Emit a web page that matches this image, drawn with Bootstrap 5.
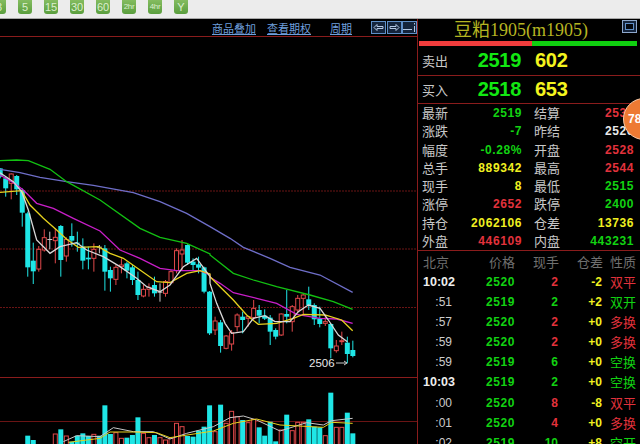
<!DOCTYPE html>
<html lang="zh">
<head>
  <meta charset="UTF-8">
  <title>豆粕1905</title>
  <link href="https://cdn.jsdelivr.net/npm/bootstrap@5.3.0/dist/css/bootstrap.min.css" rel="stylesheet">
  <style>
    html, body { height: 444px; overflow: hidden; background: #000; }
    body { font-family: "Liberation Sans", "Noto Sans CJK SC", sans-serif; }
    .period-bar { height: 19px; background: #ececec; border-bottom: 1px solid #a8a8a8; gap: 12px; overflow: hidden; }
    .period-btn { width: 14px; height: 14px; flex: none; background: linear-gradient(#84bc60, #5a9e3e); border-radius: 0 0 3px 3px; color: #dcefce; font-size: 11px; line-height: 14px; text-align: center; }
    .period-btn.first { margin-left: -8px; }
    .period-btn.tiny { font-size: 8px; letter-spacing: -.3px; }
    .chart-side { width: 417px; flex: none; }
    .chart-head { height: 18px; border-bottom: 1px solid #8a1c1c; }
    .chart-link { color: #6f9fdc; font-size: 11px; line-height: 15px; margin-top: 2px; text-decoration: underline; font-family: "Noto Sans CJK SC", sans-serif; }
    .icon-box { width: 15px; height: 13px; flex: none; display: block; margin-top: 2px; }
    .chart-svg { display: block; width: 417px; height: 407px; }
    .quote-side { flex: 1; min-width: 0; border-left: 1px solid #8a1c1c; position: relative; overflow: hidden; color: #c8c8c8; font-family: "Noto Sans CJK SC", sans-serif; }
    .quote-title { height: 22px; padding-right: 16px; color: #b5b522; font-family: "Liberation Serif", "Noto Sans CJK SC", serif; font-size: 18px; line-height: 22px; }
    .corner-icon { position: absolute; right: 3px; top: 1px; width: 15px; height: 13px; }
    .ratio-bar { height: 5px; margin: 0 3px 1px 1px; }
    .ratio-red { width: 113px; background: #f03c3c; }
    .ratio-green { flex: 1; background: #10d010; }
    .book-row { height: 28px; padding-left: 4px; font-size: 13px; line-height: 27px; }
    .book-row + .book-row { border-top: 1px solid #8a1c1c; }
    .book-price { width: 71px; text-align: right; font: bold 20px/27px "Liberation Sans", sans-serif; letter-spacing: -.3px; color: #12e812; }
    .book-size { margin-left: 14px; font: bold 20px/27px "Liberation Sans", sans-serif; letter-spacing: -.3px; color: #f4f41e; }
    .info-box { border-top: 1px solid #8a1c1c; height: 147px; }
    .info-row { height: 18.25px; line-height: 18px; font-size: 13px; padding-left: 4px; }
    .info-val { width: 72px; font: bold 12px/18px "Liberation Sans", sans-serif; letter-spacing: .6px; text-align: right; }
    .lbl-w { width: 28px; flex: none; white-space: nowrap; }
    .lbl-w.second { margin-left: 12px; }
    .tick-head { border-top: 1px solid #8a1c1c; height: 21.5px; line-height: 21px; font-size: 13px; color: #707070; }
    .tick-head span { width: 26px; flex: none; }
    .tick-row { height: 20.2px; line-height: 20px; }
    .tc-time { width: 33px; margin-left: 4px; padding-right: 3px; text-align: right; font: 12px/20px "Liberation Sans", sans-serif; color: #ccc; flex: none; }
    .tc-time.full { padding-right: 0; font-weight: bold; font-size: 12.5px; color: #eee; }
    .tc-price { width: 60px; text-align: right; font: bold 12px/20px "Liberation Sans", sans-serif; letter-spacing: .6px; color: #12d212; flex: none; }
    .tc-vol { width: 43px; text-align: right; font: bold 12px/20px "Liberation Sans", sans-serif; flex: none; }
    .tc-diff { width: 44px; text-align: right; font: bold 12px/20px "Liberation Sans", sans-serif; color: #f0f020; flex: none; }
    .tc-kind { margin-left: 8px; font-size: 13px; flex: none; white-space: nowrap; }
    .c-red { color: #e2323c; }
    .c-green { color: #12d212; }
    .c-yellow { color: #f0f020; }
    .c-white { color: #e8e8e8; }
    .orange-badge { position: absolute; left: 205px; top: 79px; width: 42px; height: 42px; border-radius: 50%; background: #ee7a33; border: 1px solid #f6c9a8; color: #fff; font: bold 12px/40px "Liberation Sans", sans-serif; padding-left: 4px; }
  </style>
</head>
<body>
  <div class="period-bar d-flex align-items-start" id="periods"></div>

  <div class="d-flex">
    <div class="chart-side">
      <div class="chart-head d-flex justify-content-end align-items-start">
        <a class="chart-link" style="margin-right:11px" href="#">商品叠加</a>
        <a class="chart-link" style="margin-right:19px" href="#">查看期权</a>
        <a class="chart-link" style="margin-right:19px" href="#">周期</a>
        <svg class="icon-box" viewBox="0 0 15 13"><rect x=".5" y=".5" width="14" height="12" fill="#14243c" stroke="#5f8fc8"/><path d="M3 6.500l3-3v2h6v2H6v2z" fill="none" stroke="#b4c8e4"/></svg>
        <svg class="icon-box" style="margin-left:1px" viewBox="0 0 15 13"><rect x=".5" y=".5" width="14" height="12" fill="#14243c" stroke="#5f8fc8"/><path d="M12 6.500l-3-3v2H3v2h6v2z" fill="none" stroke="#b4c8e4"/></svg>
        <svg class="icon-box" viewBox="0 0 15 13"><rect x=".5" y=".5" width="14" height="12" fill="#14243c" stroke="#5f8fc8"/><path d="M1 8.500h9M12.500 5v6M12.500 2v1.500" fill="none" stroke="#b4c8e4"/></svg>
      </div>
      <svg class="chart-svg" id="chart" viewBox="0 37 417 407"></svg>
    </div>

    <div class="quote-side">
      <div class="quote-title text-center">豆粕1905(m1905)</div>
      <svg class="corner-icon" viewBox="0 0 15 13"><rect x=".5" y=".5" width="14" height="12" fill="#14243c" stroke="#8ea8cc"/><rect x="3.500" y="3.500" width="8" height="6" fill="#05080f" stroke="#5f8fc8"/></svg>
      <div class="ratio-bar d-flex"><div class="ratio-red"></div><div class="ratio-green"></div></div>
      <div class="book-row d-flex"><span class="lbl-w">卖出</span><span class="book-price">2519</span><span class="book-size">602</span></div>
      <div class="book-row d-flex"><span class="lbl-w">买入</span><span class="book-price">2518</span><span class="book-size">653</span></div>
      <div class="info-box" id="info"></div>
      <div class="tick-head d-flex">
        <span style="margin-left:5px">北京</span>
        <span style="margin-left:40px">价格</span>
        <span style="margin-left:18px">现手</span>
        <span style="margin-left:18px">仓差</span>
        <span style="margin-left:7px">性质</span>
      </div>
      <div id="ticks"></div>
      <div class="orange-badge">78</div>
    </div>
  </div>

  <script src="https://cdn.jsdelivr.net/npm/bootstrap@5.3.0/dist/js/bootstrap.bundle.min.js"></script>
  <script>
    document.getElementById("periods").innerHTML = ["3", "5", "15", "30", "60", "2hr", "4hr", "Y"].map((p, i) =>
      `<div class="period-btn${i == 0 ? " first" : ""}${p.length > 2 ? " tiny" : ""}">${p}</div>`).join("");

    // label, value, colour, label, value, colour
    const info = [
      ["最新", "2519", "c-green", "结算", "2530", "c-red"],
      ["涨跌", "-7", "c-green", "昨结", "2526", "c-white"],
      ["幅度", "-0.28%", "c-green", "开盘", "2528", "c-red"],
      ["总手", "889342", "c-yellow", "最高", "2544", "c-red"],
      ["现手", "8", "c-yellow", "最低", "2515", "c-green"],
      ["涨停", "2652", "c-red", "跌停", "2400", "c-green"],
      ["持仓", "2062106", "c-yellow", "仓差", "13736", "c-yellow"],
      ["外盘", "446109", "c-red", "内盘", "443231", "c-green"]
    ];
    document.getElementById("info").innerHTML = info.map(r => `
      <div class="info-row d-flex">
        <span class="lbl-w">${r[0]}</span><span class="info-val ${r[2]}">${r[1]}</span>
        <span class="lbl-w second">${r[3]}</span><span class="info-val ${r[5]}">${r[4]}</span>
      </div>`).join("");

    const ticks = [
      ["10:02", 2520, 2, "-2", "双平", "r"], [":51", 2519, 2, "+2", "双开", "g"],
      [":57", 2520, 2, "+0", "多换", "r"], [":59", 2520, 2, "+0", "多换", "r"],
      [":59", 2519, 6, "+0", "空换", "g"], ["10:03", 2519, 2, "+0", "空换", "g"],
      [":00", 2520, 8, "-8", "双平", "r"], [":01", 2520, 4, "+0", "多换", "r"],
      [":02", 2519, 10, "+8", "空开", "g"]
    ];
    document.getElementById("ticks").innerHTML = ticks.map(t => {
      const c = t[5] == "r" ? "c-red" : "c-green";
      return `<div class="tick-row d-flex">
        <span class="tc-time${t[0].length > 3 ? " full" : ""}">${t[0]}</span>
        <span class="tc-price">${t[1]}</span>
        <span class="tc-vol ${c}">${t[2]}</span>
        <span class="tc-diff">${t[3]}</span>
        <span class="tc-kind ${c}">${t[4]}</span>
      </div>`;
    }).join("");

    // candles read off the picture: hi, body top, body bottom, lo, colour
    // first block is scaled from y=150, second from y=220, all at 1/3
    const c1 = [[55,55,80,85,"c"],[80,85,115,140,"c"],[70,72,100,148,"r"],[75,78,118,135,"c"],[115,120,188,230,"c"],[185,190,352,380,"c"],[278,332,364,402,"c"],[288,298,357,365,"r"],[238,263,300,305,"r"],[245,267,270,298,"w"],[235,262,272,340,"r"],[225,228,330,380,"c"],[262,268,318,335,"r"],[220,258,272,290,"c"],[245,278,280,305,"c"],[265,290,332,358,"c"],[290,323,328,358,"c"],[280,298,325,365,"r"],[285,290,292,310,"w"],[285,295,365,422,"c"],[350,360,385,425,"c"],[345,352,388,405,"r"],[325,345,350,370,"r"],[335,340,362,385,"c"],[345,352,390,405,"c"],[365,390,435,450,"c"],[405,418,438,442,"r"],[400,412,418,440,"r"],[380,405,430,440,"c"],[400,425,428,455,"w"],[390,395,430,440,"r"],[360,365,398,400,"r"],[295,302,362,370,"r"],[270,300,312,360,"r"],[283,285,338,345,"c"],[325,335,345,362,"c"],[320,343,353,370,"c"],[350,352,425,430,"c"]];
    const c2 = [[213,215,340,345,"c"],[290,303,330,345,"r"],[300,307,378,398,"c"],[345,348,385,388,"r"],[330,338,372,392,"r"],[280,285,320,335,"r"],[275,290,300,340,"c"],[288,290,295,320,"r"],[240,265,293,300,"r"],[255,270,287,310,"c"],[268,287,296,300,"c"],[285,293,335,375,"c"],[325,330,350,358,"c"],[280,282,345,348,"r"],[210,282,290,310,"c"],[255,260,305,335,"r"],[225,235,270,280,"r"],[222,225,235,282,"r"],[200,238,255,270,"c"],[250,255,298,315,"c"],[260,295,312,322,"c"],[285,305,310,318,"r"],[310,312,385,415,"c"],[360,378,392,398,"r"],[335,362,365,375,"r"],[350,368,402,430,"c"],[362,390,408,412,"c"]];
    const y1 = v => 150 + v / 3, y2 = v => 220 + v / 3;
    const candles = c1.map(c => [y1(c[0]), y1(c[1]), y1(c[2]), y1(c[3]), c[4]])
      .concat(c2.map(c => [y2(c[0]), y2(c[1]), y2(c[2]), y2(c[3]), c[4]]));

    const volTops = {5:197,6:210,10:192,11:178,12:198,13:215,14:197,15:190,16:198,17:193,18:197,19:106,20:192,21:188,22:205,23:203,24:195,25:142,26:190,27:203,28:195,29:203,30:210,31:205,32:160,33:170,34:198,35:200,36:182,37:170,38:106,39:185,40:104,41:160,42:124,43:140,44:150,45:158,46:148,47:172,48:197,49:155,50:214,51:180,52:134,53:182,54:157,55:157,56:148,57:170,58:172,59:197,60:68,61:172,62:172,63:128,64:190};
    const volRed = [10, 12, 17, 21, 22, 26, 27, 29, 30, 31, 32, 33, 39, 41, 42, 43, 45, 46, 51, 53, 54, 55, 59, 61, 62];

    const CY = "#1fe6e6", RD = "#e0484a", WT = "#c8c8c8";
    const X = i => 0.2 + 5.51 * i;
    let svg = "";
    [191, 249, 307.500].forEach(y => svg += `<line x1="0" x2="417" y1="${y}" y2="${y}" stroke="#6a1414" stroke-dasharray="2 1"/>`);
    svg += `<line x1="0" x2="417" y1="377.500" y2="377.500" stroke="#8a1c1c"/>`;
    svg += `<line x1="0" x2="417" y1="421.500" y2="421.500" stroke="#6a1414"/>`;

    // volume bars go behind their average lines
    Object.keys(volTops).forEach(k => {
      const i = +k, y = 370 + volTops[k] / 3, x = X(i);
      svg += volRed.includes(i)
        ? `<rect x="${x - 2}" y="${y}" width="4" height="${444 - y + 2}" fill="#000" stroke="${RD}"/>`
        : `<rect x="${x - 2.5}" y="${y}" width="5" height="${444 - y}" fill="${CY}"/>`;
    });

    candles.forEach((c, i) => {
      const x = X(i), col = c[4] == "c" ? CY : c[4] == "r" ? RD : WT;
      svg += `<line x1="${x}" x2="${x}" y1="${c[0]}" y2="${c[3]}" stroke="${col}"/>`;
      svg += c[4] == "r"
        ? `<rect x="${x - 2}" y="${c[1]}" width="4" height="${c[2] - c[1]}" fill="#000" stroke="${col}"/>`
        : `<rect x="${x - 2.5}" y="${c[1]}" width="5" height="${Math.max(c[2] - c[1], 1)}" fill="${col}"/>`;
    });

    const pts = (a, b) => a.map(p => [p[0] / 3, 150 + p[1] / 3]).concat(b.map(p => [210 + p[0] / 3, 220 + p[1] / 3])).map(p => p.join(",")).join(" ");
    const volPts = a => a.map(p => (p[0] / 3) + "," + (370 + p[1] / 3)).join(" ");
    const lines = [
      ["#6e6ec8", [[0,58],[60,68],[120,82],[200,95],[280,106],[400,128],[480,155],[560,190],[630,230]], [[0,20],[60,55],[100,82],[180,115],[240,142],[330,165],[428,217]]],
      ["#12c012", [[0,32],[50,30],[85,32],[150,58],[200,95],[300,150],[420,235],[480,262],[560,280],[630,312]], [[0,105],[70,160],[130,180],[200,200],[300,225],[370,245],[428,268]]],
      ["#c81ec8", [[0,75],[40,98],[70,120],[110,160],[160,175],[220,205],[300,243],[360,300],[420,325],[480,355],[530,362],[600,362],[630,375]], [[0,172],[30,190],[70,218],[140,235],[200,250],[260,283],[330,295],[380,297],[428,310]]],
      ["#e6d21e", [[0,127],[65,122],[90,165],[130,205],[170,240],[200,268],[235,292],[295,290],[330,310],[370,325],[420,360],[470,395],[510,398],[560,370],[600,362],[630,372]], [[0,170],[30,200],[70,240],[110,285],[145,313],[200,310],[250,295],[280,283],[345,285],[395,300],[428,332]]],
      ["#d8d8d8", [[0,68],[40,95],[65,125],[85,180],[110,270],[150,310],[180,290],[230,278],[260,300],[310,320],[360,350],[410,385],[440,410],[480,425],[510,405],[550,350],[590,325],[630,380]], [[0,190],[20,250],[45,310],[65,340],[100,335],[130,295],[165,287],[195,305],[240,305],[265,275],[295,255],[330,265],[355,300],[385,345],[412,365]]]
    ];
    lines.forEach(l => svg += `<polyline points="${pts(l[1], l[2])}" fill="none" stroke="${l[0]}" stroke-width="1.300"/>`);

    svg += `<polyline points="${volPts([[190,215],[230,197],[300,200],[340,173],[400,185],[460,185],[510,207],[560,190],[640,170],[690,143],[730,138],[770,150],[840,183],[920,158],[970,165],[995,152],[1058,145]])}" fill="none" stroke="#c8c8c8"/>`;
    svg += `<polyline points="${volPts([[205,217],[300,205],[330,186],[400,186],[470,188],[510,203],[640,183],[700,160],[770,147],[840,165],[970,172],[995,157],[1058,160]])}" fill="none" stroke="#e6d21e"/>`;

    svg += `<text x="309" y="367" fill="#e8e8e8" font-family="Liberation Sans" font-size="11.500">2506</text>`;
    svg += `<path d="M336 363h11M344 361l3 2-3 2" fill="none" stroke="#c8c8c8"/>`;
    document.getElementById("chart").innerHTML = svg;
  </script>
</body>
</html>
